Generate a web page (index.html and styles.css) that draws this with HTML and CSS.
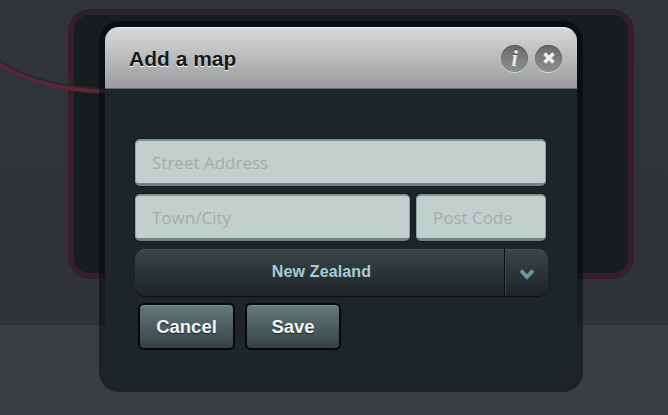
FILE: index.html
```html
<!DOCTYPE html>
<html lang="en">
	<head>
		<meta charset="UTF-8" />
		<title>Add a map</title>
		<link rel="stylesheet" href="styles.css">
	</head>
	<body>
		<div class="stage">
			<div class="band-top"></div>
			<div class="band-bottom"></div>

			<!-- card behind the dialog, with its connector -->
			<div class="card"></div>
			<svg class="wire" width="110" height="60" viewBox="0 0 110 60">
				<path class="wire-shadow" d="M-2 3 C 20 17, 50 30, 110 32" />
				<path class="wire-line" d="M-2 5 C 20 19, 50 32, 110 34" />
			</svg>

			<div class="modal">
				<div class="modal-head">
					<h1>Add a map</h1>
					<div class="head-btns">
						<button class="round-btn info-btn">i</button>
						<button class="round-btn">
							<svg width="16" height="16" viewBox="0 0 16 16">
								<path class="close-mark" d="M3.5 3.5 L12.5 12.5 M12.5 3.5 L3.5 12.5" />
							</svg>
						</button>
					</div>
				</div>
				<div class="modal-body">
					<input class="field" type="text" placeholder="Street Address">
					<div class="field-row">
						<input class="field town" type="text" placeholder="Town/City">
						<input class="field post" type="text" placeholder="Post Code">
					</div>
					<div class="select">
						<div class="select-value">New Zealand</div>
						<div class="select-arrow">
							<svg width="16" height="12" viewBox="0 0 16 12">
								<path class="chevron" d="M2 2.5 L8 9 L14 2.5" />
							</svg>
						</div>
					</div>
					<div class="actions">
						<button class="btn cancel">Cancel</button>
						<button class="btn save">Save</button>
					</div>
				</div>
			</div>
		</div>
	</body>
</html>
```

FILE: styles.css
```css
body {
	margin: 0;
	font-family: "Liberation Sans", Arial, sans-serif;
	background: #3a3e41;
}
.stage {
	position: relative;
	width: 668px;
	height: 415px;
	overflow: hidden;
}
.band-top {
	height: 325px;
	background: linear-gradient(#30353a, #2f3336);
}
.band-bottom {
	height: 90px;
	background: #3a3e41;
}
.wire {
	position: absolute;
	left: 0;
	top: 58px;
}
.wire path {
	fill: none;
}
.wire-shadow {
	stroke: #24282b;
	stroke-width: 3;
}
.wire-line {
	stroke: #5c2636;
	stroke-width: 4;
}
.card {
	position: absolute;
	left: 68px;
	top: 9px;
	width: 554px;
	height: 258px;
	background: #171c1f;
	border: 6px solid #371f29;
	border-top-color: #2e2028;
	border-radius: 22px;
}
.modal {
	position: absolute;
	left: 99px;
	top: 21px;
	width: 472px;
	height: 359px;
	background: #1e2528;
	background-clip: padding-box;
	border: 6px solid rgba(0, 0, 0, 0.45);
	border-radius: 20px;
}
.modal-head {
	display: flex;
	align-items: center;
	justify-content: space-between;
	box-sizing: border-box;
	height: 62px;
	padding: 0 15px 0 24px;
	background: linear-gradient(#d8d8d8, #9a9c9d);
	border-top: 1px solid #f2f2f2;
	border-bottom: 1px solid #5f6e6e;
	border-radius: 14px 14px 0 0;
}
h1 {
	margin: 2px 0 0;
	font-size: 21px;
	font-weight: bold;
	color: #14181b;
	text-shadow: 0 1px 0 #fff;
}
.head-btns {
	display: flex;
	gap: 7px;
}
.round-btn {
	display: flex;
	align-items: center;
	justify-content: center;
	width: 27px;
	height: 27px;
	padding: 0;
	border: 0;
	border-radius: 50%;
	background: linear-gradient(#68696b, #8d8f90);
	box-shadow: 0 1px 0 #d9dada, inset 0 1px 1px #55575a;
}
.info-btn {
	font-family: "Liberation Serif", serif;
	font-style: italic;
	font-weight: bold;
	font-size: 24px;
	color: #e6e6e6;
	text-shadow: 0 -1px 0 #4a4c4e;
}
.close-mark {
	fill: none;
	stroke: #ececec;
	stroke-width: 3.8;
}
.modal-body {
	display: flex;
	flex-direction: column;
	gap: 8px;
	padding: 50px 0 0 30px;
}
.field {
	box-sizing: border-box;
	width: 411px;
	height: 47px;
	padding: 0 16px;
	font-family: "Open Sans", sans-serif;
	font-size: 17px;
	color: #555;
	background: #c2cfcd;
	border: 0;
	border-top: 2px solid #7d9692;
	border-bottom: 3px solid #6b8682;
	border-left: 1px solid #90a6a3;
	border-right: 1px solid #90a6a3;
	border-radius: 5px;
	box-shadow: 0 0 2px #0b0e10;
}
.field::placeholder {
	color: #aaa9a9;
	opacity: 1;
}
.field-row {
	display: flex;
	gap: 6px;
}
.town {
	width: 275px;
}
.post {
	width: 130px;
}
.select {
	display: flex;
	box-sizing: border-box;
	width: 413px;
	height: 47px;
	background: linear-gradient(#3a4548, #1d2427);
	border-radius: 11px;
	box-shadow: 0 1px 1px #0c0f11, inset 0 1px 0 #465154;
}
.select-value {
	flex: 1;
	padding-left: 4px;
	line-height: 46px;
	text-align: center;
	font-size: 16px;
	font-weight: bold;
	letter-spacing: 0.15px;
	color: #a9cbd8;
	border-right: 1px solid #0d1113;
}
.select-arrow {
	display: flex;
	align-items: center;
	justify-content: center;
	box-sizing: border-box;
	width: 43px;
	padding-top: 2px;
	border-left: 1px solid #3a4548;
}
.chevron {
	fill: none;
	stroke: #6f97a3;
	stroke-width: 3.8;
}
.actions {
	display: flex;
	gap: 10px;
	margin: -1px 0 0 3px;
}
.btn {
	box-sizing: border-box;
	width: 97px;
	height: 47px;
	padding: 0;
	font-family: "Liberation Sans", Arial, sans-serif;
	font-size: 18.5px;
	font-weight: bold;
	color: #f4f6f6;
	text-shadow: 0 1px 1px #1a2022;
	background: linear-gradient(#647a7a, #364243);
	border: 2px solid #060809;
	border-radius: 6px;
	box-shadow: inset 0 1px 0 #7d9292;
}
.save {
	width: 96px;
}
```
